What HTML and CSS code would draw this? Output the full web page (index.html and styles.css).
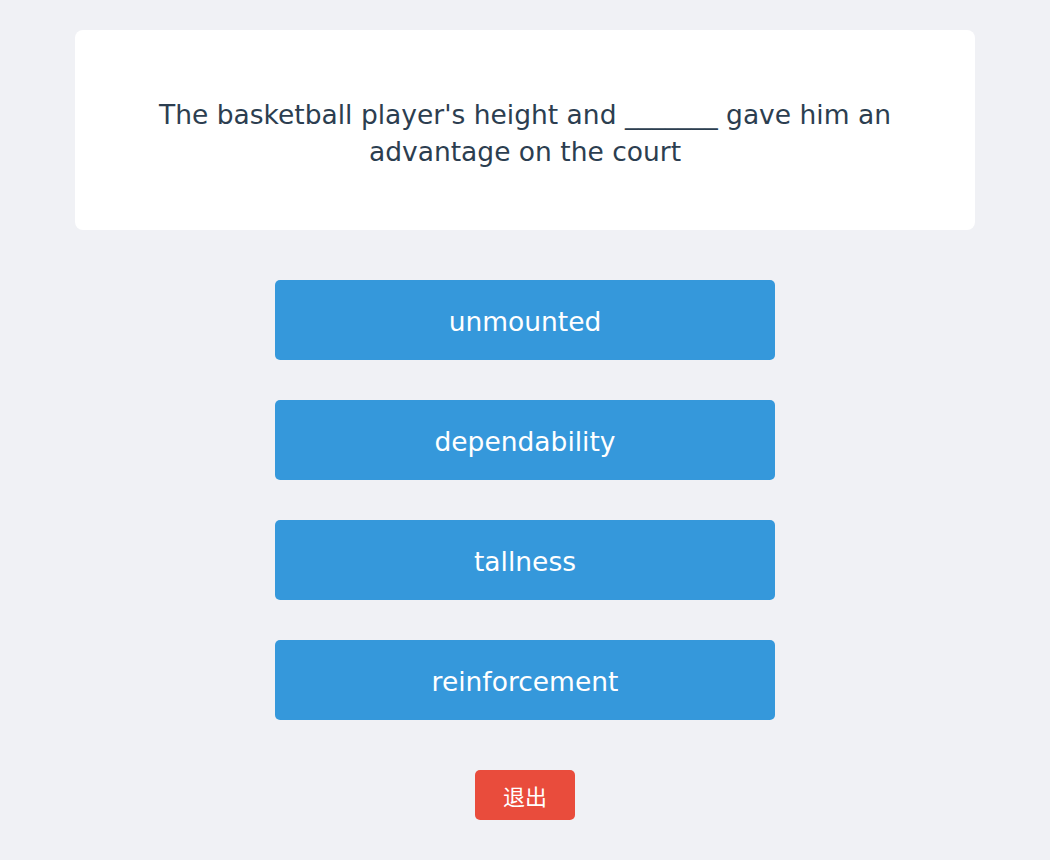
FILE: index.html
```html
<!DOCTYPE html>
<html>
<head>
<meta charset="utf-8">
<link rel="stylesheet" href="styles.css">
</head>
<body>
<div class="page">
  <div class="question-card">
    <p class="question">The basketball player's height and _______ gave him an advantage on the court</p>
  </div>
  <div class="options">
    <button class="option">unmounted</button>
    <button class="option">dependability</button>
    <button class="option">tallness</button>
    <button class="option">reinforcement</button>
  </div>
  <button class="exit">退出</button>
</div>
</body>
</html>
```
FILE: styles.css
```css
html, body {
  margin: 0;
  padding: 0;
  background: #f0f1f5;
}
body {
  font-family: "DejaVu Sans", "Noto Sans CJK SC", sans-serif;
}
.page {
  width: 900px;
  margin: 0 auto;
  padding-top: 30px;
  display: flex;
  flex-direction: column;
  align-items: center;
}
.question-card {
  box-sizing: border-box;
  width: 900px;
  height: 200px;
  background: #ffffff;
  border-radius: 8px;
  display: flex;
  align-items: center;
  justify-content: center;
  padding: 5px 60px 0;
}
.question {
  margin: 0;
  text-align: center;
  color: #2c3e50;
  font-size: 26.5px;
  line-height: 37px;
}
.options {
  margin-top: 50px;
  display: flex;
  flex-direction: column;
  gap: 40px;
}
.option {
  box-sizing: border-box;
  width: 500px;
  height: 80px;
  border: none;
  border-radius: 5px;
  background: #3598db;
  color: #ffffff;
  font-family: "DejaVu Sans", sans-serif;
  font-size: 26.5px;
  padding: 3px 0 0;
}
.exit {
  margin-top: 50px;
  width: 100px;
  height: 50px;
  border: none;
  border-radius: 5px;
  background: #e94c3c;
  color: #ffffff;
  font-family: "Noto Sans CJK SC", sans-serif;
  font-size: 22px;
  padding: 0;
}
```
